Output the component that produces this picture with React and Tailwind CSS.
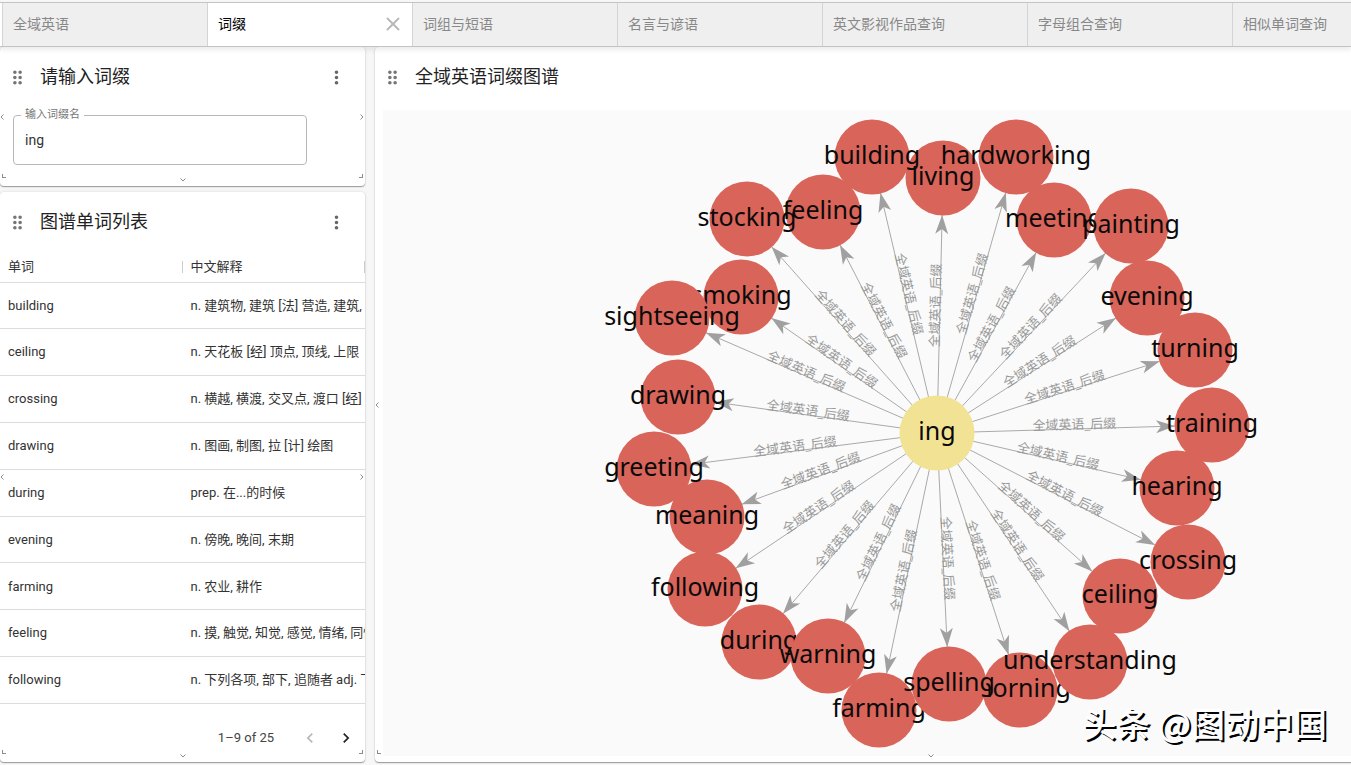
import { useState } from "react";
import { MdChevronLeft, MdChevronRight, MdDragIndicator, MdMoreVert } from "react-icons/md";
import { X } from "lucide-react";

const tabs = [
  "全域英语",
  "词缀",
  "词组与短语",
  "名言与谚语",
  "英文影视作品查询",
  "字母组合查询",
  "相似单词查询",
];

const words = [
  { word: "building", meaning: "n. 建筑物, 建筑 [法] 营造, 建筑, 建筑物" },
  { word: "ceiling", meaning: "n. 天花板 [经] 顶点, 顶线, 上限" },
  { word: "crossing", meaning: "n. 横越, 横渡, 交叉点, 渡口 [经] 划线" },
  { word: "drawing", meaning: "n. 图画, 制图, 拉 [计] 绘图" },
  { word: "during", meaning: "prep. 在...的时候" },
  { word: "evening", meaning: "n. 傍晚, 晚间, 末期" },
  { word: "farming", meaning: "n. 农业, 耕作" },
  { word: "feeling", meaning: "n. 摸, 触觉, 知觉, 感觉, 情绪, 同情" },
  { word: "following", meaning: "n. 下列各项, 部下, 追随者 adj. 下列的" },
];

const RADIUS = 37;
const center = { x: 554, y: 323 };

// later nodes are painted over earlier ones
const nodes = [
  { name: "living", x: 560, y: 68 },
  { name: "feeling", x: 440, y: 102 },
  { name: "building", x: 489, y: 47 },
  { name: "hardworking", x: 633, y: 47 },
  { name: "meeting", x: 671, y: 110 },
  { name: "painting", x: 748, y: 116 },
  { name: "evening", x: 764, y: 188 },
  { name: "turning", x: 812, y: 240 },
  { name: "training", x: 829, y: 315 },
  { name: "hearing", x: 794, y: 378 },
  { name: "ceiling", x: 737, y: 486 },
  { name: "crossing", x: 805, y: 452 },
  { name: "morning", x: 637, y: 580 },
  { name: "understanding", x: 707, y: 552 },
  { name: "farming", x: 496, y: 600 },
  { name: "spelling", x: 566, y: 574 },
  { name: "during", x: 376, y: 532 },
  { name: "warning", x: 445, y: 546 },
  { name: "following", x: 322, y: 479 },
  { name: "meaning", x: 324, y: 407 },
  { name: "greeting", x: 271, y: 359 },
  { name: "drawing", x: 295, y: 287 },
  { name: "smoking", x: 358, y: 187 },
  { name: "sightseeing", x: 289, y: 208 },
  { name: "stocking", x: 364, y: 109 },
];

function Edge({ node }) {
  const dx = node.x - center.x;
  const dy = node.y - center.y;
  const length = Math.hypot(dx, dy);
  const ux = dx / length;
  const uy = dy / length;
  const start = { x: center.x + ux * RADIUS, y: center.y + uy * RADIUS };
  const end = { x: node.x - ux * RADIUS, y: node.y - uy * RADIUS };
  const angle = (Math.atan2(dy, dx) * 180) / Math.PI;
  // keep the label readable on the left half of the circle
  const labelAngle = angle > 90 ? angle - 180 : angle < -90 ? angle + 180 : angle;

  return (
    <g>
      <line x1={start.x} y1={start.y} x2={end.x} y2={end.y} stroke="#a9a9a9" strokeWidth="1" />
      <path
        d="M0 0 L-19 -6.5 L-14 0 L-19 6.5 Z"
        fill="#a0a0a0"
        transform={`translate(${end.x} ${end.y}) rotate(${angle})`}
      />
      <text
        className="text-[13px]"
        textAnchor="middle"
        fill="#999999"
        transform={`translate(${(start.x + end.x) / 2} ${(start.y + end.y) / 2}) rotate(${labelAngle})`}
      >
        全域英语_后缀
      </text>
    </g>
  );
}

function Node({ name, x, y, color }) {
  return (
    <g>
      <circle cx={x} cy={y} r={RADIUS + 0.5} fill={color} />
      <text x={x} y={y + 7} className="text-[25px]" textAnchor="middle" fill="#0a0a0a">
        {name}
      </text>
    </g>
  );
}

function Graph() {
  return (
    <svg
      viewBox="0 0 1096 646"
      preserveAspectRatio="xMinYMin meet"
      className="block h-full w-full font-['Noto_Sans','Noto_Sans_CJK_SC',sans-serif]"
    >
      {nodes.map((node) => (
        <Edge key={node.name} node={node} />
      ))}
      {nodes.map((node) => (
        <Node key={node.name} {...node} color="#d96459" />
      ))}
      <Node name="ing" x={center.x} y={center.y} color="#f2e394" />
    </svg>
  );
}

function ResizeMarks() {
  return (
    <div className="pointer-events-none absolute inset-0 text-[#8c8c8c]">
      <svg className="absolute top-1/2 left-0 h-2 w-1 -translate-y-1/2" viewBox="0 0 4 8" fill="none" stroke="currentColor">
        <path d="M3.5 1.5 L1 4 L3.5 6.5" />
      </svg>
      <svg className="absolute top-1/2 right-px h-2 w-1 -translate-y-1/2" viewBox="0 0 4 8" fill="none" stroke="currentColor">
        <path d="M0.5 1.5 L3 4 L0.5 6.5" />
      </svg>
      <svg className="absolute bottom-1 left-1/2 h-1 w-2 -translate-x-1/2" viewBox="0 0 8 4" fill="none" stroke="currentColor">
        <path d="M1.5 0.5 L4 3 L6.5 0.5" />
      </svg>
      <span className="absolute bottom-2 left-0.5 h-1 w-1 border-b border-l border-[#8c8c8c]"></span>
      <span className="absolute right-0.5 bottom-2 h-1 w-1 border-r border-b border-[#8c8c8c]"></span>
    </div>
  );
}

function Card({ title, menu, className, children }) {
  return (
    <section
      className={`relative flex flex-col overflow-hidden rounded bg-white shadow-[0_1px_1px_rgba(0,0,0,0.35),0_0_3px_rgba(0,0,0,0.12)] ${className}`}
    >
      <header className="flex h-15 shrink-0 items-center pr-4.5 pl-[7px]">
        <MdDragIndicator size={21} className="text-[#757575]" />
        <h2 className="ml-3 grow text-lg text-[#222222]">{title}</h2>
        {menu && (
          <button type="button" aria-label="更多">
            <MdMoreVert size={21} className="text-[#666666]" />
          </button>
        )}
      </header>
      {children}
      <ResizeMarks />
    </section>
  );
}

function WordTable() {
  return (
    <div className="min-h-0 flex-1">
      <table className="h-full w-full table-fixed border-collapse text-left text-[13px] text-[#333333]">
        <thead>
          <tr className="h-[30px] border-b border-[#dcdcdc]">
            <th className="w-1/2 pl-2 font-normal">
              <div className="flex h-3 items-center justify-between border-r border-[#cccccc]">单词</div>
            </th>
            <th className="pl-2 font-normal">
              <div className="flex h-3 items-center border-r border-[#cccccc]">中文解释</div>
            </th>
          </tr>
        </thead>
        <tbody>
          {words.map((item) => (
            <tr key={item.word} className="border-b border-[#dcdcdc]">
              <td className="pl-2">{item.word}</td>
              <td className="overflow-hidden pl-2 whitespace-nowrap">{item.meaning}</td>
            </tr>
          ))}
        </tbody>
      </table>
    </div>
  );
}

export default function App() {
  const [affix, setAffix] = useState("ing");
  const [active, setActive] = useState("词缀");

  return (
    <div className="relative flex h-screen flex-col overflow-hidden bg-[#f7f7f7] font-[Roboto,'Noto_Sans_CJK_SC',sans-serif]">
      <nav className="relative z-10 mt-0.5 flex h-[45px] shrink-0 border-y border-[#c4c4c4] bg-white pl-0.5 shadow-[0_3px_5px_rgba(0,0,0,0.08)]">
        {tabs.map((tab) => (
          <div
            key={tab}
            className={`flex w-[205px] shrink-0 items-center justify-between border-l border-[#d4d4d4] pr-2 pb-0.5 pl-2.5 text-sm ${
              tab === active ? "bg-white text-black" : "bg-[#efefef] text-[#888888]"
            }`}
          >
            <button type="button" onClick={() => setActive(tab)}>
              {tab}
            </button>
            {tab === active && (
              <button type="button" aria-label="关闭">
                <X size={22} strokeWidth={2} className="text-[#b8b8b8]" />
              </button>
            )}
          </div>
        ))}
      </nav>

      <main className="flex min-h-0 flex-1 gap-2.5 pb-[3px]">
        <div className="flex w-[365px] shrink-0 flex-col gap-1.5">
          <Card title="请输入词缀" menu className="shrink-0">
            <div className="relative mt-2 mr-14.5 mb-[21px] ml-[13px]">
              <label htmlFor="affix" className="absolute -top-2 left-2 bg-white px-1 text-[11px] leading-4 text-[#777777]">
                输入词缀名
              </label>
              <input
                id="affix"
                value={affix}
                onChange={(e) => setAffix(e.target.value)}
                className="block h-[50px] w-full rounded border border-[#b8b8b8] px-[11px] text-sm text-[#333333] outline-none"
              />
            </div>
          </Card>

          <Card title="图谱单词列表" menu className="min-h-0 flex-1">
            <WordTable />
            <div className="flex h-[58px] shrink-0 items-center justify-end gap-4 pt-2.5 pr-[9px] text-[13px] text-[#444444]">
              <span className="mr-2.5">1–9 of 25</span>
              <button type="button" aria-label="上一页" disabled>
                <MdChevronLeft size={20} className="text-[#b8b8b8]" />
              </button>
              <button type="button" aria-label="下一页">
                <MdChevronRight size={20} className="text-[#222222]" />
              </button>
            </div>
          </Card>
        </div>

        {/* the graph panel runs past the right edge of the window */}
        <Card title="全域英语词缀图谱" className="-mr-34 min-w-0 flex-1">
          <div className="mx-2 mt-[3px] mb-1.5 min-h-0 flex-1 bg-[#fafafa]">
            <Graph />
          </div>
        </Card>
      </main>

      <p className="absolute right-6 bottom-4.5 font-['Noto_Sans_CJK_SC',sans-serif] text-[34px] leading-12 font-medium text-white [text-shadow:2px_2px_0_#000000]">
        头条 @图动中国
      </p>
    </div>
  );
}
